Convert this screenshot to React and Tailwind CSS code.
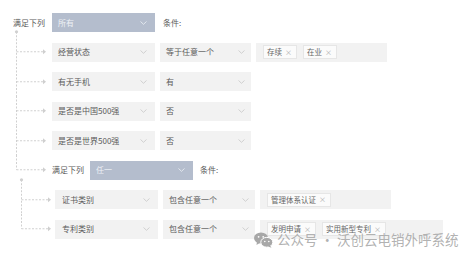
import React from "react"

const ROW = 29.5

// dashed tree connector: vertical guide + horizontal arrow
const Link = ({ width = 36, first = false, last = false }) => {
  const mid = ROW / 2
  const top = first ? -5.25 : 0
  return (
    <svg width={width} height={ROW} className="shrink-0 overflow-visible self-start">
      <line x1="0.5" y1={top} x2="0.5" y2={last ? mid : ROW} stroke="#d0d0d0" strokeWidth="1" strokeDasharray="2 1.5" />
      <line x1="0.5" y1={mid} x2="27" y2={mid} stroke="#d0d0d0" strokeWidth="1" strokeDasharray="2 1.5" />
      <polygon points={`27,${mid - 2.5} 30,${mid} 27,${mid + 2.5}`} fill="#cfcfcf" />
      {first && <circle cx="0.5" cy={top} r="1.6" fill="#d0d0d0" />}
    </svg>
  )
}

const Chevron = ({ color = "#c8c8c8" }) => (
  <svg width="7" height="4" viewBox="0 0 7 4" className="shrink-0">
    <polyline points="0.5,0.5 3.5,3.3 6.5,0.5" fill="none" stroke={color} strokeWidth="0.8" />
  </svg>
)

const Select = ({ label, w, pl = "pl-[6px]", pr = "pr-[7px]" }) => (
  <div className={`${w} h-[19px] bg-[#f2f2f2] flex items-center justify-between ${pl} ${pr} shrink-0`}>
    <span>{label}</span>
    <Chevron />
  </div>
)

const BlueSelect = ({ label, w }) => (
  <div className={`${w} h-[19px] bg-[#b4bdcd] flex items-center justify-between pl-[6px] pr-[8px] shrink-0 text-[#eef1f6]`}>
    <span>{label}</span>
    <Chevron color="#eef1f6" />
  </div>
)

const Tag = ({ text }) => (
  <span className="inline-flex items-center h-[14px] pl-[3px] pr-[4px] bg-[#fbfbfb] border border-[#e6e6e6] text-[7.5px] text-[#666]">
    {text}
    <span className="ml-[3px] text-[#aaa] text-[7px]">×</span>
  </span>
)

const TagBox = ({ tags = [], w = "w-[131px]" }) => (
  <div className={`${w} h-[19px] bg-[#f2f2f2] flex items-center gap-[6px] pl-[7px] shrink-0`}>
    {tags.map((t) => (
      <Tag key={t} text={t} />
    ))}
  </div>
)

const Rule = ({ field, op, tags, tagW, nested, first, last }) => (
  <div className="flex items-center h-[29.5px]">
    <Link width={nested ? 34 : 36} first={first} last={last} />
    <Select label={field} w="w-[103px]" pl={nested ? "pl-[7px]" : "pl-[6px]"} pr="pr-[8px]" />
    <div className="ml-[5px]">
      <Select label={op} w={nested ? "w-[92px]" : "w-[91px]"} pr="pr-[6px]" />
    </div>
    {tags !== undefined && (
      <div className="ml-[5px]">
        <TagBox tags={tags} w={tagW} />
      </div>
    )}
  </div>
)

const WeChat = () => (
  <svg width="19" height="16" viewBox="0 0 19 16">
    <ellipse cx="7" cy="6" rx="7" ry="5.6" fill="#a8a8a8" />
    <polygon points="3,9.5 2.5,13 6,10.8" fill="#a8a8a8" />
    <circle cx="4.6" cy="4.8" r="0.9" fill="#fff" />
    <circle cx="9.2" cy="4.8" r="0.9" fill="#fff" />
    <ellipse cx="12.8" cy="10.3" rx="6" ry="4.9" fill="#a8a8a8" stroke="#fff" strokeWidth="1" />
    <polygon points="16,13.5 17.5,15.8 14,14.6" fill="#a8a8a8" />
    <circle cx="10.8" cy="9.5" r="0.8" fill="#fff" />
    <circle cx="14.8" cy="9.5" r="0.8" fill="#fff" />
  </svg>
)

export default function App() {
  return (
    <div className="relative w-[476px] h-[259px] bg-white overflow-hidden text-[8px] leading-none text-[#5a5a5a] font-['Noto_Sans_CJK_SC',sans-serif]">
      <div className="pt-[7.75px]">
        <div className="flex items-center h-[29.5px] pl-[13px]">
          <span className="w-[39px]">满足下列</span>
          <BlueSelect label="所有" w="w-[103px]" />
          <span className="ml-[8px]">条件:</span>
        </div>

        <div className="pl-[16px]">
          <Rule field="经营状态" op="等于任意一个" tags={["存续", "在业"]} first />
          <Rule field="有无手机" op="有" />
          <Rule field="是否是中国500强" op="否" />
          <Rule field="是否是世界500强" op="否" />

          <div className="flex items-center h-[29.5px]">
            <Link last />
            <span className="w-[38px]">满足下列</span>
            <BlueSelect label="任一" w="w-[103px]" />
            <span className="ml-[7px]">条件:</span>
          </div>

          <div className="pl-[5px]">
            <Rule field="证书类别" op="包含任意一个" tags={["管理体系认证"]} nested first />
            <Rule field="专利类别" op="包含任意一个" tags={["发明申请", "实用新型专利"]} tagW="w-[183px]" nested last />
          </div>
        </div>
      </div>

      {/* watermark overlay */}
      <div className="absolute left-[254px] top-[232px] flex items-center gap-[4px] text-[13.5px] text-[#a8a8a8]/90">
        <WeChat />
        <span>公众号 · 沃创云电销外呼系统</span>
      </div>
    </div>
  )
}
